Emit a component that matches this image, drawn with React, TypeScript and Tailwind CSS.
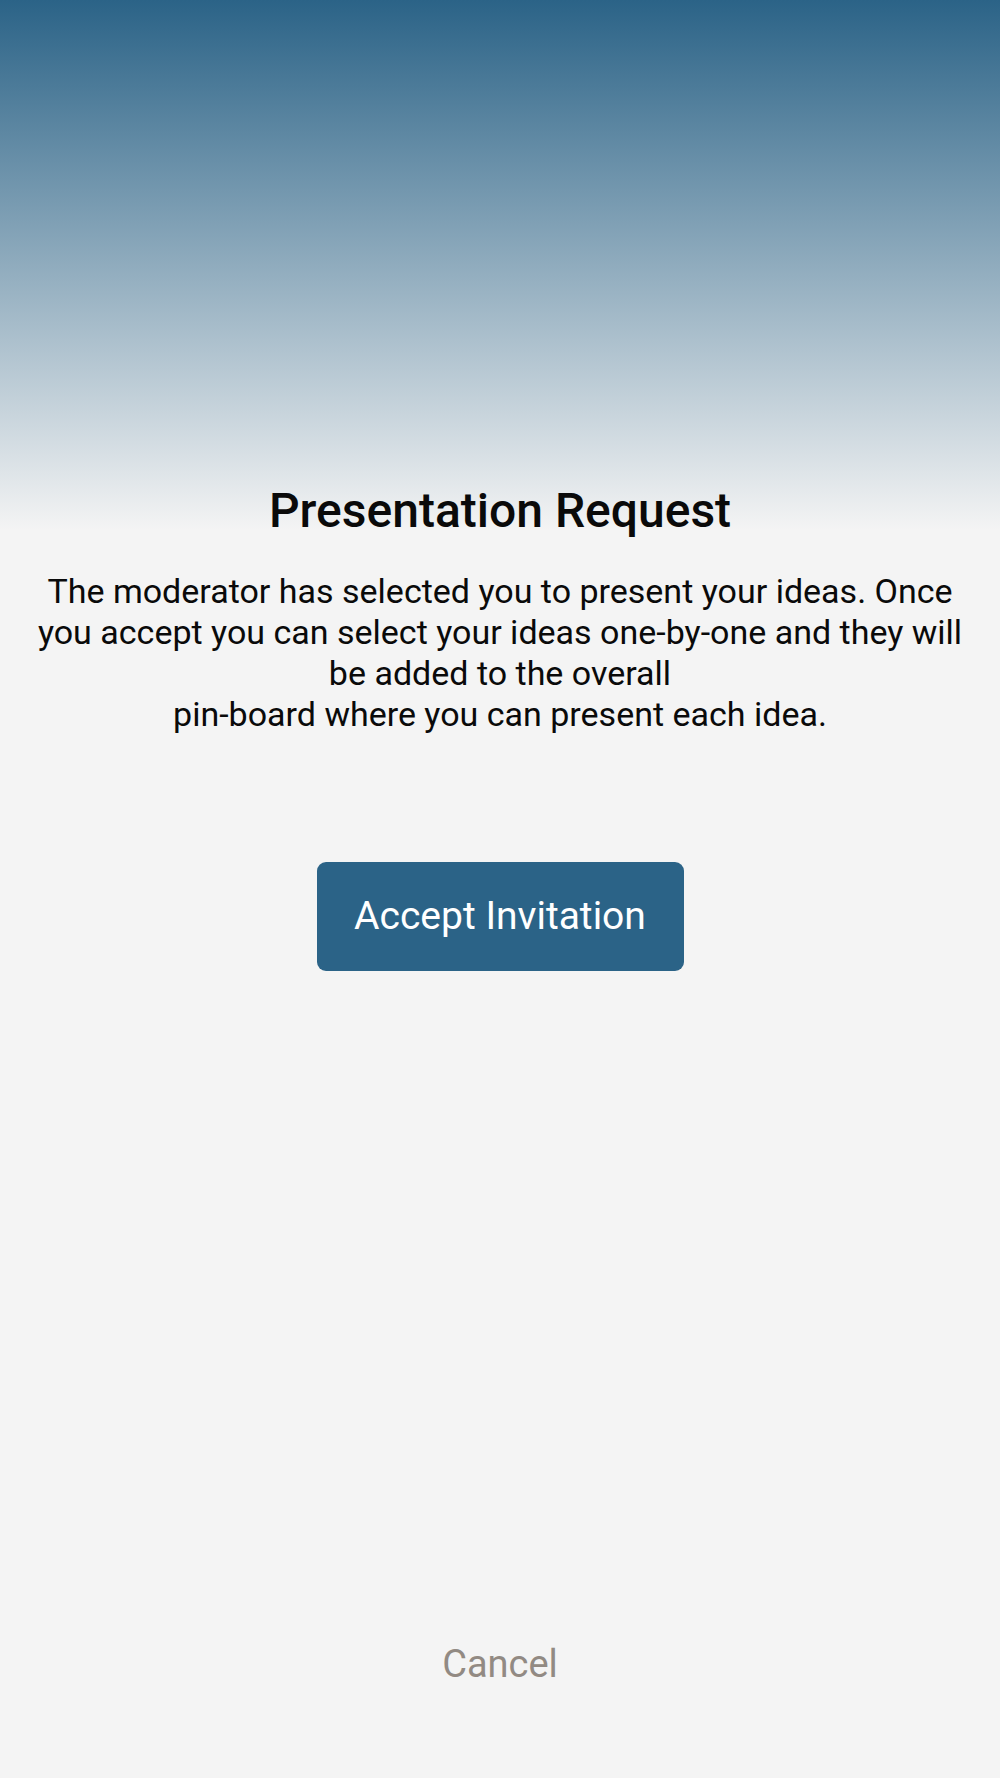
import { useState } from "react";

export default function App() {
  const [accepted, setAccepted] = useState(false);

  return (
    <div
      className="flex min-h-[1778px] flex-col items-center bg-[#f4f4f4] bg-[linear-gradient(to_bottom,#2b6387_0px,#f4f4f4_530px)] px-6 text-center"
      style={{ fontFamily: "Roboto, 'Noto Sans', sans-serif" }}
    >
      <h1 className="mt-[483px] text-[48px] leading-[56px] font-medium text-[#0a0a0a]">
        Presentation Request
      </h1>
      <p className="mt-[32px] text-[34px] leading-[41px] text-[#0a0a0a]">
        The moderator has selected you to present your ideas. Once you accept
        you can select your ideas one-by-one and they will be added to the
        overall
        <br />
        pin-board where you can present each idea.
      </p>

      <button
        type="button"
        onClick={() => setAccepted(true)}
        className="mt-[127px] flex h-[109px] w-[367px] items-center justify-center rounded-[9px] bg-[#2b6387] text-[39px] text-white"
      >
        {accepted ? "Accepted" : "Accept Invitation"}
      </button>

      <button
        type="button"
        className="mt-auto mb-[92px] text-[38px] leading-[44px] text-[#928a83]"
      >
        Cancel
      </button>
    </div>
  );
}
